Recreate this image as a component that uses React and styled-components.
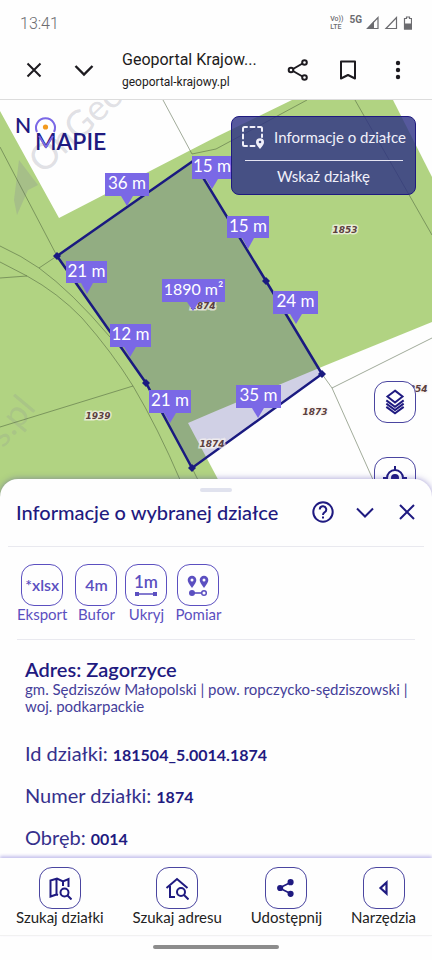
import React from 'react';
import styled, { createGlobalStyle } from 'styled-components';

const navy = '#1f1a80';
const violet = '#7a68e6';
const tool = '#5b4fc0';

const GlobalStyle = createGlobalStyle`
  * {
    box-sizing: border-box;
  }
  body {
    margin: 0;
    background: #fefefe;
    font-family: Lato, 'Open Sans', sans-serif;
  }
  button {
    font-family: inherit;
    cursor: pointer;
  }
  svg {
    display: block;
  }
`;

const Page = styled.div`
  display: flex;
  flex-direction: column;
  height: 100vh;
  overflow: hidden;
`;

const StatusBar = styled.div`
  display: flex;
  flex: none;
  align-items: center;
  justify-content: space-between;
  height: 46px;
  padding: 0 20px;
  color: #6c6c70;
  font: 300 16px Roboto, sans-serif;
`;

const StatusIcons = styled.div`
  display: flex;
  align-items: center;
  gap: 4px;
`;

const Volte = styled.span`
  font: 500 7px/8px Roboto, sans-serif;
`;

const Network = styled.span`
  font: 700 10px/14px Roboto, sans-serif;
  padding: 0 0 6px 2px;
`;

const BrowserBar = styled.header`
  display: flex;
  flex: none;
  align-items: center;
  height: 54px;
  padding: 0 18px 6px;
  border-bottom: 1px solid #dcdcdc;
  color: #1d1b20;
`;

const IconButton = styled.button`
  display: flex;
  align-items: center;
  justify-content: center;
  width: ${p => p.$size || 32}px;
  height: 32px;
  padding: 0;
  border: 0;
  background: none;
  color: inherit;
`;

const PageInfo = styled.div`
  flex: 1;
  min-width: 0;
  padding-left: 4px;
  font-family: Roboto, sans-serif;
  white-space: nowrap;
`;

const PageTitle = styled.div`
  font-size: 16px;
  line-height: 24px;
`;

const PageUrl = styled.div`
  font-size: 12px;
  line-height: 20px;
`;

const BarActions = styled.div`
  display: flex;
  gap: 18px;
`;

const MapArea = styled.main`
  position: relative;
  flex: 1;
  min-height: 0;
  margin-bottom: -20px;
  overflow: hidden;
  background: #b1d382;
`;

const MapDrawing = styled.svg`
  width: 100%;
  height: 100%;
`;

const MapOverlay = styled.div`
  position: absolute;
  inset: 0;
  display: flex;
  justify-content: space-between;
  padding: 16px 16px 0;
`;

const MapControls = styled.div`
  display: flex;
  flex-direction: column;
  align-items: flex-end;
  justify-content: space-between;
`;

const ParcelPanel = styled.div`
  display: flex;
  flex-direction: column;
  align-items: center;
  width: 185px;
  height: 79px;
  border: 1px solid ${navy};
  border-radius: 8px;
  background: rgba(44, 48, 132, 0.8);
`;

const PanelButton = styled.button`
  display: flex;
  align-items: center;
  justify-content: center;
  gap: 9px;
  width: 100%;
  height: ${p => p.$height}px;
  padding: 0 0 3px;
  border: 0;
  background: none;
  color: #f1f0fa;
  font-size: 15px;
  line-height: 20px;
  white-space: nowrap;
`;

const PanelLine = styled.div`
  width: 158px;
  height: 1px;
  background: #e4e4f2;
`;

const ButtonColumn = styled.div`
  display: flex;
  flex-direction: column;
  gap: 34px;
`;

const Sheet = styled.section`
  position: relative;
  flex: none;
  border-radius: 18px 18px 0 0;
  background: #fefefe;
  box-shadow: 0 0 6px rgba(70, 55, 170, 0.5);
  color: ${navy};
`;

const Handle = styled.div`
  width: 32px;
  height: 4px;
  margin: 0 auto;
  border-radius: 2px;
  background: #e0e2ee;
`;

const SheetTop = styled.div`
  padding-top: 9px;
  margin: 0 8px;
  border-bottom: 1px solid #e9e9ef;
`;

const SheetHeader = styled.div`
  display: flex;
  align-items: center;
  justify-content: space-between;
  height: 54px;
  padding: 0 1px 14px 8px;
`;

const SheetTitle = styled.h2`
  margin: 0;
  font-size: 20px;
  font-weight: 500;
  line-height: 22px;
  white-space: nowrap;
`;

const HeaderActions = styled.div`
  display: flex;
  gap: 10px;
`;

const Tools = styled.div`
  display: flex;
  gap: 8px;
  margin: 0 17px;
  padding: 17px 0 17px;
  border-bottom: 1px solid #e9e9ef;
  color: ${tool};
`;

const Tile = styled.span`
  display: flex;
  align-items: center;
  justify-content: center;
  width: 42px;
  height: 42px;
  border: 1px solid ${p => p.$color || '#4a45a0'};
  border-radius: 13px;
  background: #fefefe;
  color: ${p => p.$color || navy};
  font-size: 16px;
  font-weight: 600;
`;

const TileButton = styled.button`
  display: flex;
  flex-direction: column;
  align-items: center;
  padding: 0;
  border: 0;
  background: none;
  color: ${p => p.$color || '#222'};
  font-size: 15px;
  line-height: 16px;
  white-space: nowrap;
`;

const Details = styled.div`
  padding: 18px 20px 10px 25px;
`;

const Address = styled.h3`
  margin: 0;
  font-size: 20px;
  font-weight: 600;
  line-height: 22px;
`;

const District = styled.p`
  margin: 1px 0 27px;
  color: #45409a;
  font-size: 15px;
  line-height: 17px;
`;

const DetailRow = styled.div`
  display: flex;
  align-items: baseline;
  gap: 5px;
  height: 22px;
  color: #35308c;
  font-size: 20px;
  line-height: 22px;

  & + & {
    margin-top: 20px;
  }

  b {
    color: ${navy};
    font-size: 16px;
  }
`;

const BottomNav = styled.nav`
  position: relative;
  display: flex;
  flex: none;
  justify-content: space-between;
  padding: 9px 16px 10px;
  border-bottom: 1px solid #f1f1f1;
  background: #fefefe;
  box-shadow: 0 -2px 3px rgba(70, 55, 200, 0.3);
`;

const HomeArea = styled.div`
  flex: none;
  height: 24px;
  padding-top: 9px;
`;

const HomeBar = styled.div`
  width: 126px;
  height: 4px;
  margin: 0 auto;
  border-radius: 2px;
  background: #8c8c8c;
`;

const LogoDrawing = styled.svg`
  overflow: visible;
`;

const Icon = ({ size = 24, width = 2, children }) => (
  <svg
    width={size}
    height={size}
    viewBox="0 0 24 24"
    fill="none"
    stroke="currentColor"
    strokeWidth={width}
    aria-hidden="true"
  >
    {children}
  </svg>
);

const pin = 'M0 0c-3-4-4.300-5.900-4.300-8a4.300 4.300 0 0 1 8.600 0c0 2.100-1.300 4-4.300 8z';

// x, y, width, height of the box and the point that its arrow touches
const distances = [
  { text: '36 m', x: 105, y: 73, w: 44, h: 23, tip: [127, 106] },
  { text: '15 m', x: 192, y: 56, w: 40, h: 23, tip: [212, 89] },
  { text: '15 m', x: 227, y: 116, w: 42, h: 22, tip: [248, 149] },
  { text: '21 m', x: 66, y: 161, w: 41, h: 22, tip: [87, 194] },
  { text: '1890 m²', x: 162, y: 179, w: 63, h: 23, tip: [193, 211] },
  { text: '12 m', x: 110, y: 224, w: 41, h: 23, tip: [130, 257] },
  { text: '24 m', x: 273, y: 191, w: 45, h: 23, tip: [296, 224] },
  { text: '21 m', x: 149, y: 290, w: 42, h: 23, tip: [170, 323] },
  { text: '35 m', x: 236, y: 285, w: 45, h: 23, tip: [258, 318] },
];

const parcelNumbers = [
  { text: '1853', x: 345, y: 133 },
  { text: '1939', x: 98, y: 319 },
  { text: '1873', x: 315, y: 315 },
  { text: '1874', x: 212, y: 347 },
  { text: '1854', x: 415, y: 292 },
];

const corners = [[57, 156], [266, 181], [322, 274], [192, 368], [146, 283]];

const ParcelMap = () => (
  <MapDrawing viewBox="0 0 432 400" preserveAspectRatio="xMidYMin slice">
    <rect width="432" height="400" fill="#b1d382" />
    <g fill="#fefefe">
      <path d="M0 0V11L59 118L216 37L292 0z" />
      <path d="M393 0L432 77V0z" />
      <path d="M188 323L216 311L324 266L432 222V400H229z" />
    </g>
    <g fill="#8a8a9a" fillOpacity="0.27" fontFamily="Lato, sans-serif" fontSize="36">
      <text transform="translate(43 75) rotate(-43)">OnGeo</text>
      <text transform="translate(3 349) rotate(-50)" fillOpacity="0.2">s.pl</text>
      <path d="M19 60L38 85L28 90L17 115L14 100z" />
    </g>
    <g fill="none" stroke="#465a37" strokeOpacity="0.5">
      <path d="M163 0L192 54L216 49L307 0M355 0L432 135" />
      <path d="M0 47L57 156L39 168M0 146Q22 156 39 168Q72 192 110 237" />
      <path d="M0 162L27 176Q58 193 82 218Q112 252 133 286Q158 328 181 382" />
      <path d="M0 178L27 176M0 327L133 286M192 368L199 382" />
      <path d="M322 274L332 288L374 382M332 288L432 238" />
    </g>
    <path
      d="M57 156L193 61L266 181L322 274L192 368L146 283z"
      fill="#1a1a80"
      fillOpacity="0.2"
      stroke="#1a1a80"
      strokeWidth="2.500"
    />
    {corners.map(([x, y]) => (
      <path key={`${x}-${y}`} d={`M${x - 4} ${y}l4 -4l4 4l-4 4z`} fill="#1a1a80" />
    ))}
    <g
      fontFamily="'DejaVu Sans', sans-serif"
      fontSize="9"
      fontStyle="italic"
      fontWeight="700"
      textAnchor="middle"
      fill="#5c4040"
      stroke="#fbf6f2"
      strokeWidth="3"
      strokeOpacity="0.7"
      paintOrder="stroke"
    >
      {parcelNumbers.map(n => (
        <text key={n.text} x={n.x} y={n.y}>{n.text}</text>
      ))}
      <text x="203" y="209">1874</text>
    </g>
    <g fontFamily="Lato, sans-serif" fontSize="17" textAnchor="middle">
      {distances.map(({ text, x, y, w, h, tip }) => (
        <g key={`${text}-${x}`}>
          <rect x={x} y={y} width={w} height={h} fill={violet} />
          <path d={`M${tip[0] - 6} ${y + h}h12L${tip[0]} ${tip[1]}z`} fill={violet} />
          <text
            x={x + w / 2}
            y={y + 16}
            fill="#fff"
            fontSize={text.length > 5 ? 16 : 17}
          >
            {text}
          </text>
        </g>
      ))}
    </g>
  </MapDrawing>
);

const Logo = () => (
  <LogoDrawing width="96" height="42" viewBox="0 0 96 42" role="img" aria-label="Nomapie">
    <g fill={navy} fontFamily="Lato, sans-serif" fontWeight="600">
      <text x="-1" y="17" fontSize="21">N</text>
      <text x="19" y="34" fontSize="23">MAPIE</text>
    </g>
    <path d="M21 16A9.500 9.500 0 1 1 38 16" fill="none" stroke={violet} strokeWidth="2" />
    <path d="M23 20L30 31L37 20" fill="none" stroke={violet} strokeWidth="2" />
    <circle cx="29.500" cy="11" r="2.600" fill="#f39a1e" />
  </LogoDrawing>
);

const navItems = [
  {
    label: 'Szukaj działki',
    icon: (
      <Icon size={24}>
        <path d="M20.500 11V3L15 5.500L9 2.500L2.500 4.500V20.500l6-2V2.500M15 5.500V10M8.500 18.500l1.500 .5" />
        <circle cx="16.500" cy="16.500" r="4" />
        <path d="M19.500 19.500l4 4" />
      </Icon>
    ),
  },
  {
    label: 'Szukaj adresu',
    icon: (
      <Icon size={24}>
        <path d="M1.500 12L12 3l10.500 9M5 10v11h5" />
        <circle cx="16" cy="16" r="4" />
        <path d="M19 19l4.500 4.500" />
      </Icon>
    ),
  },
  {
    label: 'Udostępnij',
    icon: (
      <Icon size={20}>
        <path d="M18 5L4 12l14 7" />
        <g fill="currentColor">
          <circle cx="17.500" cy="5" r="2.700" />
          <circle cx="5" cy="12" r="2.700" />
          <circle cx="17.500" cy="19" r="2.700" />
        </g>
      </Icon>
    ),
  },
  {
    label: 'Narzędzia',
    icon: (
      <Icon size={24} width={2.200}>
        <path d="M14.500 6.500v11L8.500 12z" />
      </Icon>
    ),
  },
];

const tools = [
  { label: 'Eksport', icon: '*xlsx' },
  { label: 'Bufor', icon: '4m' },
  {
    label: 'Ukryj',
    icon: (
      <svg width="24" height="26" viewBox="0 0 24 26" fill="currentColor">
        <text x="12" y="16" fontSize="17" fontWeight="600" textAnchor="middle">1m</text>
        <path d="M1 20h4v4h-4zM19 20h4v4h-4zM5 21.300h14v1.400H5z" />
      </svg>
    ),
  },
  {
    label: 'Pomiar',
    icon: (
      <svg width="24" height="24" viewBox="0 0 24 24" fill="currentColor">
        <path transform="translate(6 15)" d={pin} />
        <path transform="translate(18 15)" d={pin} />
        <circle cx="6" cy="7" r="1.500" fill="#fefefe" />
        <circle cx="18" cy="7" r="1.500" fill="#fefefe" />
        <circle cx="6" cy="20" r="3" />
        <path d="M6 19.200h9v1.600H6z" />
        <circle cx="18" cy="20" r="2.300" fill="none" stroke="currentColor" strokeWidth="1.500" />
      </svg>
    ),
  },
];

const details = [
  ['Id działki:', '181504_5.0014.1874'],
  ['Numer działki:', '1874'],
  ['Obręb:', '0014'],
];

export default function App() {
  return (
    <Page>
      <GlobalStyle />
      <StatusBar>
        <span>13:41</span>
        <StatusIcons>
          <Volte>Vo))<br />LTE</Volte>
          <Network>5G</Network>
          <svg width="46" height="14" viewBox="0 0 46 14" fill="none" stroke="currentColor" strokeWidth="1.200">
            <path d="M1.500 12.500H12V1.500z" />
            <path d="M1 13h7V5z" fill="currentColor" stroke="none" />
            <path d="M20 12.500H30.500V1.500z" />
            <path d="M38.500 2.500h2v-1.500h3v1.500h2v10.500h-7z" />
            <path d="M38 7.500h8v6h-8z" fill="currentColor" stroke="none" />
          </svg>
        </StatusIcons>
      </StatusBar>
      <BrowserBar>
        <IconButton aria-label="Zamknij kartę">
          <Icon><path d="M5.500 5.500l13 13M18.500 5.500l-13 13" /></Icon>
        </IconButton>
        <IconButton aria-label="Zwiń" $size={68}>
          <Icon width={2.400}><path d="M3.500 8l8.500 8.500L20.500 8" /></Icon>
        </IconButton>
        <PageInfo>
          <PageTitle>Geoportal Krajow...</PageTitle>
          <PageUrl>geoportal-krajowy.pl</PageUrl>
        </PageInfo>
        <BarActions>
          <IconButton aria-label="Udostępnij stronę">
            <Icon>
              <path d="M16.500 5.500L7 11M7 13l9.500 5.500" />
              <circle cx="18.500" cy="4.500" r="2.300" />
              <circle cx="5" cy="12" r="2.300" />
              <circle cx="18.500" cy="19.500" r="2.300" />
            </Icon>
          </IconButton>
          <IconButton aria-label="Dodaj zakładkę">
            <Icon><path d="M5 3.500h14v17l-7-3.500l-7 3.500z" strokeLinejoin="round" /></Icon>
          </IconButton>
          <IconButton aria-label="Więcej">
            <Icon width={0}>
              <g fill="currentColor">
                <circle cx="12" cy="5" r="2.200" />
                <circle cx="12" cy="12" r="2.200" />
                <circle cx="12" cy="19" r="2.200" />
              </g>
            </Icon>
          </IconButton>
        </BarActions>
      </BrowserBar>
      <MapArea>
        <ParcelMap />
        <MapOverlay>
          <Logo />
          <MapControls>
            <ParcelPanel>
              <PanelButton $height={43}>
                <Icon size={24}>
                  <path
                    d="M2 6V3.500Q2 2 3.500 2H6M9.500 2h4M17 2h2.500Q21 2 21 3.500V6M21 9.500v2.500M2 9.500v4M2 17v2.500Q2 21 3.500 21H6M9.500 21h4"
                    strokeLinecap="round"
                  />
                  <path
                    transform="translate(19 24)"
                    d="M0 0c-2.500-3.200-4-4.800-4-6.800a4 4 0 0 1 8 0c0 2-1.500 3.600-4 6.800zM0-8.300a1.300 1.300 0 1 0 0 2.600a1.300 1.300 0 0 0 0-2.600z"
                    fill="currentColor"
                    fillRule="evenodd"
                    stroke="none"
                  />
                </Icon>
                Informacje o działce
              </PanelButton>
              <PanelLine />
              <PanelButton $height={32}>Wskaż działkę</PanelButton>
            </ParcelPanel>
            <ButtonColumn>
              <TileButton aria-label="Warstwy">
                <Tile>
                  <Icon size={26} width={1.800}>
                    <path d="M12 1.500L19 7L12 12.500L5 7zM4 10.500L12 16.500l8-6M4 13.500L12 19.500l8-6M4 16.500L12 22.500l8-6" />
                  </Icon>
                </Tile>
              </TileButton>
              <TileButton aria-label="Moja lokalizacja">
                <Tile>
                  <Icon size={24}>
                    <circle cx="12" cy="12" r="8" />
                    <circle cx="12" cy="12" r="4" fill="currentColor" stroke="none" />
                    <path d="M12 0v4M12 20v4M0 12h4M20 12h4" />
                  </Icon>
                </Tile>
              </TileButton>
            </ButtonColumn>
          </MapControls>
        </MapOverlay>
      </MapArea>
      <Sheet>
        <SheetTop>
          <Handle />
          <SheetHeader>
            <SheetTitle>Informacje o wybranej działce</SheetTitle>
            <HeaderActions>
              <IconButton aria-label="Pomoc">
                <Icon>
                  <circle cx="12" cy="12" r="9.700" />
                  <path d="M8.800 9.500a3.200 3.200 0 1 1 4.700 2.800Q12 13.200 12 15M12 16.500v2" />
                </Icon>
              </IconButton>
              <IconButton aria-label="Zwiń panel">
                <Icon><path d="M4 8.500l8 8l8-8" /></Icon>
              </IconButton>
              <IconButton aria-label="Zamknij panel">
                <Icon><path d="M5 5l14 14M19 5L5 19" /></Icon>
              </IconButton>
            </HeaderActions>
          </SheetHeader>
        </SheetTop>
        <Tools>
          {tools.map(t => (
            <TileButton key={t.label} $color={tool}>
              <Tile $color={tool}>{t.icon}</Tile>
              {t.label}
            </TileButton>
          ))}
        </Tools>
        <Details>
          <Address>Adres: Zagorzyce</Address>
          <District>
            gm. Sędziszów Małopolski | pow. ropczycko-sędziszowski | woj. podkarpackie
          </District>
          {details.map(([label, value]) => (
            <DetailRow key={label}>
              {label} <b>{value}</b>
            </DetailRow>
          ))}
        </Details>
      </Sheet>
      <BottomNav>
        {navItems.map(item => (
          <TileButton key={item.label}>
            <Tile>{item.icon}</Tile>
            {item.label}
          </TileButton>
        ))}
      </BottomNav>
      <HomeArea>
        <HomeBar />
      </HomeArea>
    </Page>
  );
}
